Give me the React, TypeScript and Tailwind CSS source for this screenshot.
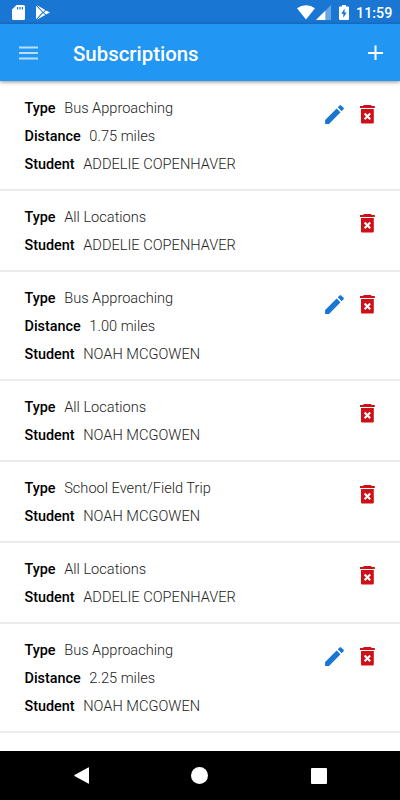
import { MdEdit } from "react-icons/md";

type Subscription = {
  type: string;
  distance?: string;
  student: string;
};

const subscriptions: Subscription[] = [
  { type: "Bus Approaching", distance: "0.75 miles", student: "ADDELIE COPENHAVER" },
  { type: "All Locations", student: "ADDELIE COPENHAVER" },
  { type: "Bus Approaching", distance: "1.00 miles", student: "NOAH MCGOWEN" },
  { type: "All Locations", student: "NOAH MCGOWEN" },
  { type: "School Event/Field Trip", student: "NOAH MCGOWEN" },
  { type: "All Locations", student: "ADDELIE COPENHAVER" },
  { type: "Bus Approaching", distance: "2.25 miles", student: "NOAH MCGOWEN" },
];

const StatusBar = () => (
  <div className="flex h-6 shrink-0 items-center bg-[#1976d2] pt-px text-white">
    {/* SD card */}
    <svg className="ml-3 h-[15px] w-[13px]" viewBox="0 0 13 15" fill="currentColor">
      <path
        fillRule="evenodd"
        d="M4.5 0H11.5Q13 0 13 1.5V13.5Q13 15 11.5 15H1.5Q0 15 0 13.5V4.5ZM5 2V4.5H6.2V2ZM7.4 2V4.5H8.6V2ZM9.8 2V4.5H11V2Z"
      />
    </svg>
    {/* Play store */}
    <svg className="ml-[11px] h-[15px] w-[14px]" viewBox="0 0 14 15" fill="currentColor">
      <path d="M0 .7 6.3 7.3 0 14.2ZM.8 0 9.2 4.9 7.1 6.9ZM.8 14.8 7.1 8 9.2 9.9ZM10 5.4 14 7.4 10 9.4 7.9 7.4Z" />
    </svg>
    <div className="ml-auto flex items-center">
      {/* Wifi */}
      <svg className="h-[15px] w-[18px]" viewBox="0 0 18 15" fill="currentColor">
        <path d="M9 14.6 0 3.3Q4 .3 9 .3T18 3.3Z" />
      </svg>
      {/* Signal */}
      <svg className="ml-px h-[15px] w-[15px]" viewBox="0 0 15 15" fill="currentColor">
        <path d="M15 0V15H0Z" opacity=".35" />
        <path d="M9.3 5.7V15H0Z" />
      </svg>
      {/* Battery */}
      <svg className="ml-2 h-[15px] w-[10px]" viewBox="0 0 10 15" fill="currentColor">
        <path
          fillRule="evenodd"
          d="M3 0H7V1.5H9Q10 1.5 10 2.5V14Q10 15 9 15H1Q0 15 0 14V2.5Q0 1.5 1 1.5H3ZM5.6 3.5 2.3 8.8H4.3V12.8L7.7 7.4H5.6Z"
        />
      </svg>
      <span className="mr-2 ml-[7px] w-[36px] pt-px text-[14.3px] leading-[23px] font-medium whitespace-nowrap">
        11:59
      </span>
    </div>
  </div>
);

const Header = () => (
  <header className="z-10 flex h-[57px] shrink-0 items-center bg-[#2196f3] text-white shadow-[0_1px_4px_rgba(0,0,0,0.45)]">
    <button className="ml-[19px] h-[14px] w-[19px]" aria-label="Menu">
      <svg className="h-[14px] w-[19px]" viewBox="0 0 19 14" fill="#bbdffb">
        <path d="M0 .5H19V2.5H0ZM0 6H19V8H0ZM0 11.5H19V13.5H0Z" />
      </svg>
    </button>
    <h1 className="ml-[35px] pt-[3px] text-[20.4px] leading-7 font-medium">Subscriptions</h1>
    <button className="mr-[17px] ml-auto h-[15px] w-[15px]" aria-label="Add">
      <svg className="h-[15px] w-[15px]" viewBox="0 0 15 15" fill="currentColor">
        <path d="M6.5 .5H8.5V7H15V9H8.5V15H6.5V9H0V7H6.5Z" />
      </svg>
    </button>
  </header>
);

const TrashIcon = () => (
  <svg className="size-[25px] text-[#d01018]" viewBox="0 0 25 25">
    <path
      fill="currentColor"
      d="M8.9 3H15.9L16.8 4H19.8V6H5V4H8ZM6 7.1H18.8V20.6Q18.8 21.6 17.8 21.6H7Q6 21.6 6 20.6Z"
    />
    <path d="M9.6 11.6 15.2 17.2M15.2 11.6 9.6 17.2" stroke="#fff" strokeWidth="2.1" />
  </svg>
);

const Field = ({ label, value }: { label: string; value: string }) => (
  <div className="flex h-[27.8px] items-center gap-[8.6px] text-[14.6px] whitespace-nowrap">
    <dt className="text-[14.4px] font-medium text-black">{label}</dt>
    <dd className="font-light text-[#222]">{value}</dd>
  </div>
);

const SubscriptionRow = ({ item }: { item: Subscription }) => (
  <li
    className={`flex justify-between border-b-2 border-[#ebebeb] pt-[13.3px] pr-5 pl-[24.5px] ${
      item.distance ? "h-[108.8px]" : "h-[81.1px]"
    }`}
  >
    <dl>
      <Field label="Type" value={item.type} />
      {item.distance && <Field label="Distance" value={item.distance} />}
      <Field label="Student" value={item.student} />
    </dl>
    <div className="flex gap-2 pt-[6.7px]">
      {item.distance && <MdEdit className="size-[25px] text-[#1976d2]" />}
      <TrashIcon />
    </div>
  </li>
);

const NavigationBar = () => (
  <nav className="flex h-[49px] shrink-0 items-center bg-black pl-[74px] text-white">
    <svg className="h-[17px] w-[15px]" viewBox="0 0 15 17" fill="currentColor">
      <path d="M15 .9V16.1Q15 17 14.2 16.5L.5 9Q0 8.5.5 8L14.2.5Q15 0 15 .9Z" />
    </svg>
    <span className="ml-[102px] size-[17px] rounded-full bg-white" />
    <span className="ml-[103px] size-4 rounded-[1px] bg-white" />
  </nav>
);

export default function App() {
  return (
    <div className="flex h-[800px] w-[400px] flex-col overflow-hidden bg-white font-[Roboto,sans-serif]">
      <StatusBar />
      <Header />
      <ul className="min-h-0 flex-1 overflow-hidden pt-px">
        {subscriptions.map((item, index) => (
          <SubscriptionRow key={index} item={item} />
        ))}
      </ul>
      <NavigationBar />
    </div>
  );
}
